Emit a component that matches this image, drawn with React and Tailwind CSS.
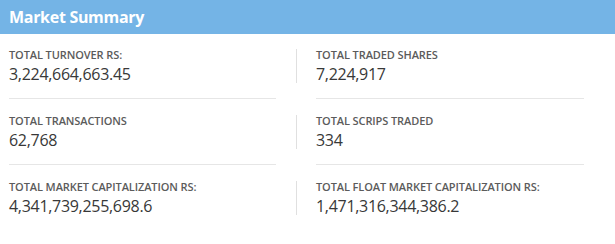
import React from 'react';

const ROWS = [
  [
    { label: 'TOTAL TURNOVER RS:', value: '3,224,664,663.45' },
    { label: 'TOTAL TRADED SHARES', value: '7,224,917' },
  ],
  [
    { label: 'TOTAL TRANSACTIONS', value: '62,768' },
    { label: 'TOTAL SCRIPS TRADED', value: '334' },
  ],
  [
    { label: 'TOTAL MARKET CAPITALIZATION RS:', value: '4,341,739,255,698.6' },
    { label: 'TOTAL FLOAT MARKET CAPITALIZATION RS:', value: '1,471,316,344,386.2' },
  ],
];

function Stat({ label, value }) {
  return (
    <div className="h-[34px] flex flex-col">
      <div className="text-[11px] leading-[11px] font-semibold text-[#5b5b5b] tracking-[-0.1px]">{label}</div>
      <div className="mt-[4px] text-[16px] leading-[20px] text-[#383838] tracking-[-0.3px]">{value}</div>
    </div>
  );
}

export default function App() {
  return (
    <div className="w-[615px] h-[244px] bg-white" style={{ fontFamily: '"Open Sans", sans-serif' }}>
      {/* Header */}
      <div className="h-[34px] bg-[#74b4e6] px-[9px] flex items-center">
        <h2 className="text-[16px] font-bold text-white tracking-[-0.3px]">Market Summary</h2>
      </div>

      {/* Stats */}
      <div className="pt-[15px] pl-[9px]">
        {ROWS.map((row, i) => (
          <div key={i} className="flex">
            <div className="w-[287px] pr-[20px]">
              <Stat {...row[0]} />
              {i < ROWS.length - 1 && <div className="mt-[15px] mb-[16px] border-t border-[#e6e6e6]" />}
            </div>
            <div className="w-[288px]">
              <div className="border-l border-[#e0e0e0] pl-[19px]">
                <Stat {...row[1]} />
              </div>
              {i < ROWS.length - 1 && <div className="ml-[20px] mt-[15px] mb-[16px] border-t border-[#e6e6e6]" />}
            </div>
          </div>
        ))}
      </div>
    </div>
  );
}
